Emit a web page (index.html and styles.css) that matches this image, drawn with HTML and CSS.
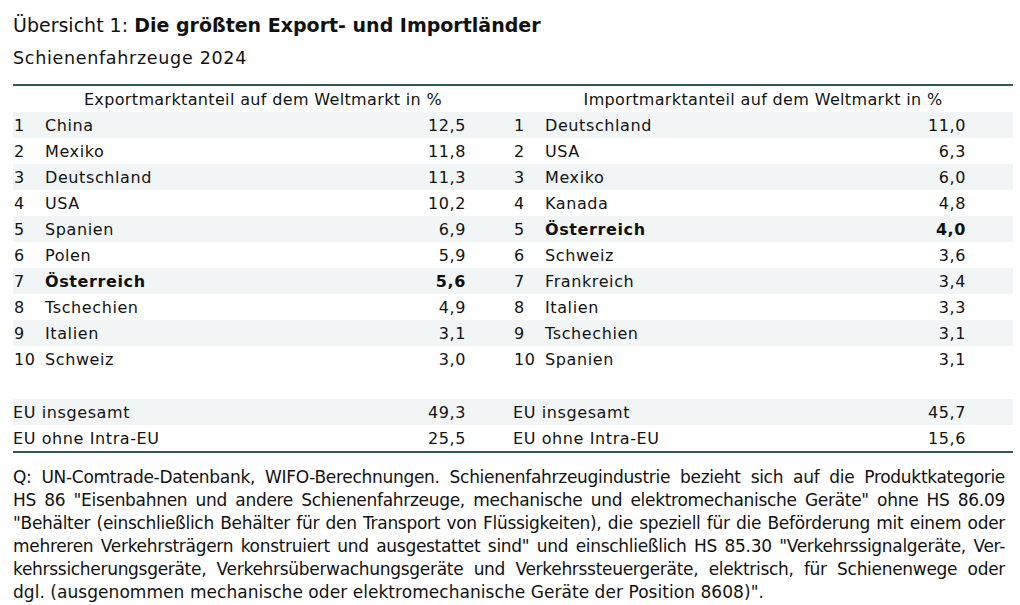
FILE: index.html
```html
<!DOCTYPE html>
<html lang="de">
<head>
<meta charset="utf-8">
<title>Übersicht 1</title>
<link rel="stylesheet" href="styles.css">
</head>
<body>
<main class="page">
  <h1 class="title"><span class="title-lead">Übersicht 1: </span><strong class="title-main">Die größten Export- und Importländer</strong></h1>
  <p class="subtitle">Schienenfahrzeuge 2024</p>
  <table class="ranking">
    <colgroup>
      <col class="c-rank"><col class="c-name"><col class="c-val">
      <col class="c-rank"><col class="c-name"><col class="c-val">
    </colgroup>
    <thead>
      <tr><th colspan="3">Exportmarktanteil auf dem Weltmarkt in %</th><th colspan="3">Importmarktanteil auf dem Weltmarkt in %</th></tr>
    </thead>
    <tbody>
      <tr class="shade"><td class="rank">1</td><td>China</td><td class="val">12,5</td><td class="rank">1</td><td>Deutschland</td><td class="val">11,0</td></tr>
      <tr><td class="rank">2</td><td>Mexiko</td><td class="val">11,8</td><td class="rank">2</td><td>USA</td><td class="val">6,3</td></tr>
      <tr class="shade"><td class="rank">3</td><td>Deutschland</td><td class="val">11,3</td><td class="rank">3</td><td>Mexiko</td><td class="val">6,0</td></tr>
      <tr><td class="rank">4</td><td>USA</td><td class="val">10,2</td><td class="rank">4</td><td>Kanada</td><td class="val">4,8</td></tr>
      <tr class="shade"><td class="rank">5</td><td>Spanien</td><td class="val">6,9</td><td class="rank">5</td><td class="hl">Österreich</td><td class="val hl">4,0</td></tr>
      <tr><td class="rank">6</td><td>Polen</td><td class="val">5,9</td><td class="rank">6</td><td>Schweiz</td><td class="val">3,6</td></tr>
      <tr class="shade"><td class="rank">7</td><td class="hl">Österreich</td><td class="val hl">5,6</td><td class="rank">7</td><td>Frankreich</td><td class="val">3,4</td></tr>
      <tr><td class="rank">8</td><td>Tschechien</td><td class="val">4,9</td><td class="rank">8</td><td>Italien</td><td class="val">3,3</td></tr>
      <tr class="shade"><td class="rank">9</td><td>Italien</td><td class="val">3,1</td><td class="rank">9</td><td>Tschechien</td><td class="val">3,1</td></tr>
      <tr><td class="rank">10</td><td>Schweiz</td><td class="val">3,0</td><td class="rank">10</td><td>Spanien</td><td class="val">3,1</td></tr>
      <tr class="spacer"><td colspan="6"></td></tr>
      <tr class="shade"><td colspan="2">EU insgesamt</td><td class="val">49,3</td><td colspan="2">EU insgesamt</td><td class="val">45,7</td></tr>
      <tr><td colspan="2">EU ohne Intra-EU</td><td class="val">25,5</td><td colspan="2">EU ohne Intra-EU</td><td class="val">15,6</td></tr>
    </tbody>
  </table>
  <p class="note">
    <span class="note-line">Q: UN-Comtrade-Datenbank, WIFO-Berechnungen. Schienenfahrzeugindustrie bezieht sich auf die Produktkategorie</span>
    <span class="note-line">HS 86 "Eisenbahnen und andere Schienenfahrzeuge, mechanische und elektromechanische Geräte" ohne HS 86.09</span>
    <span class="note-line">"Behälter (einschließlich Behälter für den Transport von Flüssigkeiten), die speziell für die Beförderung mit einem oder</span>
    <span class="note-line">mehreren Verkehrsträgern konstruiert und ausgestattet sind" und einschließlich HS 85.30 "Verkehrssignalgeräte, Ver-</span>
    <span class="note-line">kehrssicherungsgeräte, Verkehrsüberwachungsgeräte und Verkehrssteuergeräte, elektrisch, für Schienenwege oder</span>
    <span class="note-line note-last">dgl. (ausgenommen mechanische oder elektromechanische Geräte der Position 8608)".</span>
  </p>
</main>
</body>
</html>
```

FILE: styles.css
```css
html, body {
  margin: 0;
  padding: 0;
  background: #ffffff;
}

.page {
  padding: 12px 0 0 13px;
  width: 1000px;
  font-family: "DejaVu Sans", "Liberation Sans", sans-serif;
  color: #111111;
}

.title {
  margin: 0;
  font-size: 19px;
  line-height: 26px;
  font-weight: normal;
  letter-spacing: 0;
}

.title-main {
  font-weight: bold;
}

.subtitle {
  margin: 7px 0 0;
  font-size: 17.5px;
  line-height: 26px;
  letter-spacing: 0.7px;
}

.ranking {
  margin-top: 13px;
  width: 1000px;
  border-collapse: collapse;
  table-layout: fixed;
  font-size: 16px;
  letter-spacing: 0.6px;
  border-top: 2px solid #2f5a5a;
  border-bottom: 2px solid #2f5a5a;
}

.c-rank { width: 32px; }
.c-name { width: 368px; }
.c-val { width: 100px; }

.ranking th {
  font-weight: normal;
  height: 26px;
  padding: 0;
  text-align: center;
  letter-spacing: 0.35px;
}

.ranking td {
  height: 26px;
  padding: 0;
  white-space: nowrap;
}

.ranking td.rank {
  padding-left: 1px;
}

.ranking td.val {
  text-align: right;
  padding-right: 47px;
}

.ranking tr.spacer td {
  height: 27px;
}

.ranking tr.shade td {
  background: #f1f5f5;
}

.ranking .hl {
  font-weight: bold;
}

.note {
  margin: 13px 0 0;
  width: 992px;
  font-size: 17px;
  line-height: 23px;
  letter-spacing: -0.3px;
}

.note-line {
  display: block;
  white-space: nowrap;
  text-align: justify;
  text-align-last: justify;
}

.note-line.note-last {
  text-align: left;
  text-align-last: left;
  letter-spacing: 0.05px;
}
```
